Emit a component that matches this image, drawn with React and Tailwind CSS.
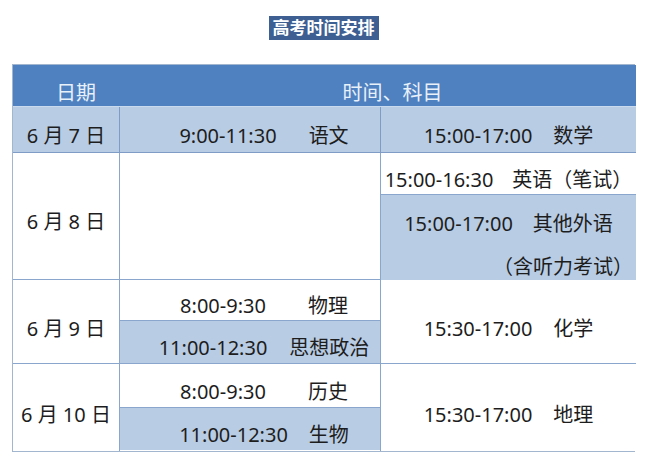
import React from 'react';

const font = { fontFamily: '"Noto Sans", "Noto Sans CJK SC", sans-serif' };

function Slot({ time, subject, gap, blue, h, shift = 'pl-[28px]', extra = '' }) {
  return (
    <div
      className={`flex items-center justify-center pt-[12px] ${shift} ${extra} ${
        blue ? 'bg-[#b8cce4]' : 'bg-white'
      }`}
      style={{ height: h }}
    >
      <span>{time}</span>
      <span style={{ marginLeft: gap }}>{subject}</span>
    </div>
  );
}

export default function App() {
  return (
    <div className="min-h-[462px] w-[655px] bg-white text-[20px] text-[#1d1d1d]" style={font}>
      <div className="ml-[12px] w-[623px] pt-[16px]">
        <div className="flex justify-center">
          <h1 className="bg-[#3d5f92] px-[4px] text-[17px] font-bold leading-[24px] text-white">高考时间安排</h1>
        </div>

        <div className="mt-[24px] grid grid-cols-[107px_261px_255px] grid-rows-[42px_46px_127px_84px_87px] border border-[#a3b6cf]">
          {/* header */}
          <div className="flex items-center justify-center border-b border-[#c9daef] bg-[#4f81c0] pl-[19px] pt-[14px] text-[#e8f0fa]">
            日期
          </div>
          <div className="col-span-2 flex items-center justify-center border-b border-[#c9daef] bg-[#4f81c0] pl-[29px] pt-[14px] text-[#e8f0fa]">
            时间、科目
          </div>

          {/* 6月7日 */}
          <div className="flex items-center justify-center border-r border-b border-[#7e9cc6] bg-[#b8cce4] pt-[12px]">
            6 月 7 日
          </div>
          <div className="border-r border-b border-[#7e9cc6]">
            <Slot time="9:00-11:30" subject="语文" gap={32} blue h={45} />
          </div>
          <div className="border-b border-[#7e9cc6]">
            <Slot time="15:00-17:00" subject="数学" gap={21} blue h={45} shift="pl-0" />
          </div>

          {/* 6月8日 */}
          <div className="flex items-center justify-center border-r border-b border-[#8aa6cc] bg-white pt-[12px]">
            6 月 8 日
          </div>
          <div className="border-r border-b border-[#8aa6cc] bg-white" />
          <div className="flex flex-col border-b border-[#8aa6cc]">
            <Slot time="15:00-16:30" subject="英语（笔试）" gap={19} h={42} shift="pl-0" extra="border-b border-[#8aa6cc]" />
            <div className="flex flex-1 flex-col bg-[#b8cce4] pt-[7px]">
              <div className="flex h-[43px] items-center justify-center">
                <span>15:00-17:00</span>
                <span className="ml-[20px]">其他外语</span>
              </div>
              <div className="flex h-[43px] items-center justify-end pr-[3px]">（含听力考试）</div>
            </div>
          </div>

          {/* 6月9日 */}
          <div className="flex items-center justify-center border-r border-b border-[#8aa6cc] bg-white pt-[14px]">
            6 月 9 日
          </div>
          <div className="flex flex-col border-r border-b border-[#8aa6cc]">
            <Slot time="8:00-9:30" subject="物理" gap={42} h={41} extra="border-b border-[#8aa6cc]" />
            <Slot time="11:00-12:30" subject="思想政治" gap={22} blue h={42} />
          </div>
          <div className="flex items-center justify-center border-b border-[#8aa6cc] bg-white pt-[14px]">
            <span>15:30-17:00</span>
            <span className="ml-[21px]">化学</span>
          </div>

          {/* 6月10日 */}
          <div className="flex items-center justify-center border-r border-[#8aa6cc] bg-white pt-[14px]">
            6 月 10 日
          </div>
          <div className="flex flex-col border-r border-[#8aa6cc]">
            <Slot time="8:00-9:30" subject="历史" gap={42} h={44} extra="border-b border-[#8aa6cc]" />
            <Slot time="11:00-12:30" subject="生物" gap={21} blue h={42} />
          </div>
          <div className="flex items-center justify-center bg-white pt-[14px]">
            <span>15:30-17:00</span>
            <span className="ml-[21px]">地理</span>
          </div>
        </div>
      </div>
    </div>
  );
}
